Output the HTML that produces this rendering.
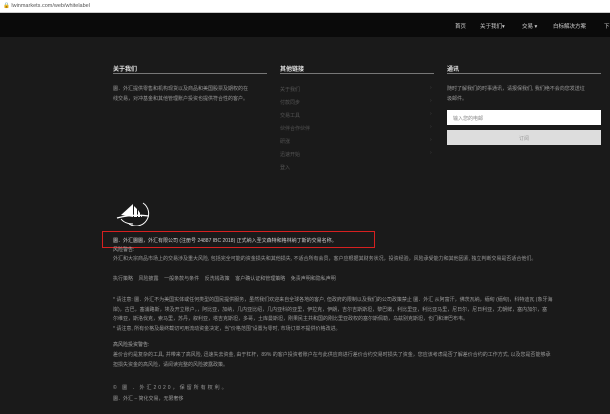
<!DOCTYPE html>
<html><head><meta charset="utf-8"><style>
*{margin:0;padding:0;box-sizing:border-box}
body{width:610px;height:414px;overflow:hidden;background:#1a1a1a;font-family:"Liberation Sans","Noto Sans CJK SC",sans-serif;color:#9a9a9a;position:relative}
.a{position:absolute;white-space:nowrap}
.t{font-size:5px;line-height:6px}
.url{top:0;left:0;width:610px;height:13px;background:#fff;border-bottom:1px solid #ccc}
.hdr{top:13px;left:0;width:610px;height:24px;background:#0a0a0a}
.nav{font-size:5.5px;color:#d0d0d0;top:22px}
.h{font-size:6px;color:#e6e6e6;font-weight:bold;top:64px}
.ln{height:1px;background:#777;top:73px}
.lk{font-size:5px;color:#555;left:280px}
.ar{font-size:5px;color:#444;left:430px}
</style></head><body>
<div class="a url"></div>
<div class="a" style="top:3px;left:3px;font-size:5.5px;color:#555">&#128274; lwinmarkets.com/web/whitelabel</div>
<div class="a hdr"></div>
<div class="a nav" style="left:455px">首页</div>
<div class="a nav" style="left:480px">关于我们▾</div>
<div class="a nav" style="left:522px">交易 ▾</div>
<div class="a nav" style="left:553px">白标解决方案</div>
<div class="a nav" style="left:604px">下</div>

<div class="a h" style="left:113px">关于我们</div>
<div class="a h" style="left:280px">其他链接</div>
<div class="a h" style="left:447px">通讯</div>
<div class="a ln" style="left:113px;width:154px"></div>
<div class="a ln" style="left:280px;width:154px"></div>
<div class="a ln" style="left:447px;width:154px"></div>

<div class="a t" style="left:113px;top:85px;color:#999;line-height:9.5px">圜．外汇提供零售和机构现货以及商品和美国股票及期权的在<br>线交易，对冲基金和其他管理账户投资也提供符合性的客户。</div>
<div class="a lk" style="top:86px">关于我们</div><div class="a ar" style="top:85px">›</div>
<div class="a lk" style="top:99px">付款同步</div><div class="a ar" style="top:98px">›</div>
<div class="a lk" style="top:112px">交易工具</div><div class="a ar" style="top:111px">›</div>
<div class="a lk" style="top:125px">伙伴合作伙伴</div><div class="a ar" style="top:124px">›</div>
<div class="a lk" style="top:138px">研涨</div><div class="a ar" style="top:137px">›</div>
<div class="a lk" style="top:151px">迅速开始</div><div class="a ar" style="top:150px">›</div>
<div class="a lk" style="top:164px">登入</div>

<div class="a t" style="left:447px;top:85px;color:#999;line-height:9.5px">随时了解我们的时事通讯，请报保我们, 我们绝不会向您发送垃<br>圾邮件。</div>
<div class="a" style="left:447px;top:110px;width:154px;height:15px;background:#fff"></div>
<div class="a" style="left:453px;top:115px;font-size:5px;color:#888">输入您的电邮</div>
<div class="a" style="left:447px;top:130px;width:154px;height:15px;background:#ddd"></div>
<div class="a" style="left:519px;top:135px;font-size:5px;color:#999">订阅</div>

<svg class="a" style="left:115px;top:200px" width="38" height="26" viewBox="0 0 38 26">
<path d="M6 15 L18 4 L18 17 Z" fill="#fff"/>
<path d="M19 6 L19 17 L22 17 L22 9 Z M23 10 L23 17 L25 17 L25 13 Z M26 14 L26 17 L27 17 Z" fill="#fff"/>
<path d="M2 18 Q16 14 34 16" stroke="#fff" stroke-width="1.3" fill="none"/>
<path d="M28 3 A10 10 0 0 1 14 24" stroke="#fff" stroke-width="1" fill="none"/>
<path d="M6 19 Q10 24 18 24" stroke="#fff" stroke-width="1" fill="none"/>
</svg>

<div class="a" style="left:102px;top:231px;width:273px;height:17px;border:1.5px solid #d62020"></div>
<div class="a t" style="left:113px;top:238px;color:#ccc">圜．外汇圜圜，外汇有限公司 (注册号 24887 IBC 2018) 正式纳入圣文森特和格林纳丁斯的交易名称。</div>
<div class="a t" style="left:113px;top:247px;color:#aaa">风险警告:</div>
<div class="a t" style="left:113px;top:256px">外汇和大宗商品市场上的交易涉及重大风险, 包括完全可能的资金损失和其他损失, 不适合所有会员，客户应根据其财务状况，投资经验，风险承受能力和其他因素, 独立判断交易是否适合他们。</div>
<div class="a t" style="left:113px;top:276px">执行策略&nbsp;&nbsp;&nbsp;&nbsp;风险披露&nbsp;&nbsp;&nbsp;&nbsp;一般条款与条件&nbsp;&nbsp;&nbsp;&nbsp;反洗钱政策&nbsp;&nbsp;&nbsp;&nbsp;客户确认证和管理策略&nbsp;&nbsp;&nbsp;&nbsp;免责声明和隐私声明</div>
<div class="a t" style="left:113px;top:296px;line-height:9.5px">* 请注意: 圜．外汇不为美国实体或任何类型的国民提供服务，虽然我们欢迎来自全球各地的客户, 但政府的限制以及我们的公司政策禁止 圜．外汇 从阿富汗，佛茨瓦纳，缅甸 (缅甸)，科特迪瓦 (象牙海<br>岸)，古巴，塞浦路斯，埃及开立账户，，阿比亚，加纳，几内亚比绍，几内亚科的亚里，伊拉克，伊朗，吉尔吉斯斯坦，黎巴嫩，利比里亚，利比亚马里，尼日尔，尼日利亚，尤朝鲜，塞内加尔，塞<br>尔维亚，斯洛伐克，索马里，苏丹，叙利亚，塔吉克斯坦，多哥，土库曼斯坦，刚果民主共和国的刚比里亚政权的塞尔斯佩勒，乌兹别克斯坦，也门和津巴布韦。<br>* 请注意, 所有价格及最终截切可用流动资金决定，当"价格范围"设置为零时, 市场订单不提供价格改进。</div>
<div class="a t" style="left:113px;top:342px;color:#aaa">高风险投资警告:</div>
<div class="a t" style="left:113px;top:351px;line-height:9.5px">差价合约是复杂的工具, 并带来了高风险, 迅速失去资金, 由于杠杆，89% 的客户投资者账户在与此供应商进行差价合约交易时损失了资金，您应该考虑是否了解差价合约的工作方式, 以及您是否能够承<br>担损失资金的高风险，请阅读完整的风险披露政策。</div>
<div class="a t" style="left:113px;top:385px;letter-spacing:2px">© 圜 ．外汇2020，保留所有权利。</div>
<div class="a t" style="left:113px;top:396px">圜．外汇 – 简化交易，无限奢侈</div>
</body></html>
